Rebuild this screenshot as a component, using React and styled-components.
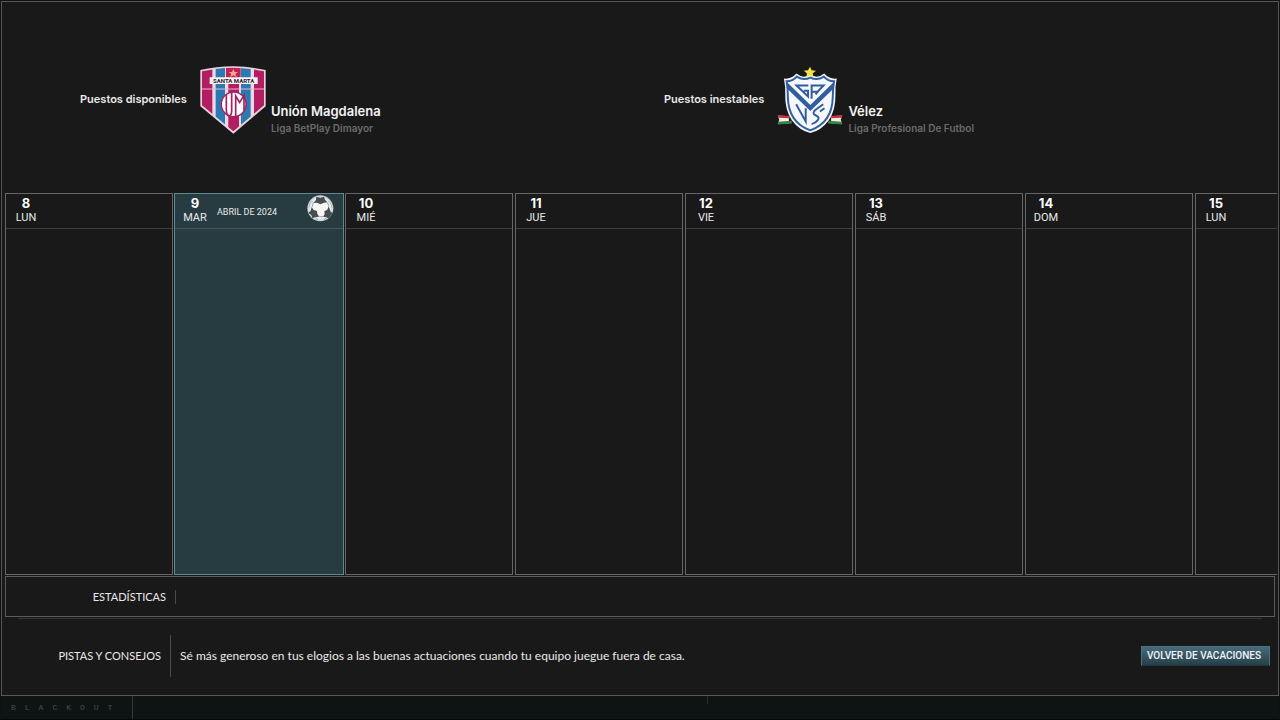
import styled, { createGlobalStyle } from "styled-components"

const GlobalStyle = createGlobalStyle`
    * {
        box-sizing: border-box;
    }

    body {
        margin: 0;
        background: #0c1213;
        color: #e9e9e9;
        font-family: Lato, "Open Sans", sans-serif;
    }

    h2, p {
        margin: 0;
    }

    svg {
        flex: none;
    }
    `

const Page = styled.div`
    min-height: 100vh;
    display: flex;
    flex-direction: column;
    padding: 1px 1px 0;
    `

const Dialog = styled.main`
    flex: 1;
    display: flex;
    flex-direction: column;
    background: #191919;
    border: 1px solid #565858;
    `

const Teams = styled.header`
    height: 191px;
    display: grid;
    grid-template-columns: 584px 1fr;
    padding: 64px 0 0 78px;
    `

const Team = styled.section`
    display: flex;
    align-items: flex-start;
    gap: 5px;
    `

const Status = styled.p`
    margin-right: 8px;
    padding-top: 25px;
    font: 600 11px/16px Inter, sans-serif;
    `

const Club = styled.div`
    padding-top: 36px;

    h2 {
        font: 600 13px/18px Inter, sans-serif;
        color: #f4f4f4;
    }

    p {
        font: 600 10px/16px Inter, sans-serif;
        color: #6b6b6b;
    }
    `

const Week = styled.div`
    flex: 1;
    min-height: 382px;
    display: flex;
    gap: 2px;
    margin: 0 1px 0 3px;
    overflow: hidden;
    `

const Day = styled.section`
    flex: 0 0 ${(props) => (props.$today ? "170px" : "168px")};
    display: flex;
    flex-direction: column;
    margin: ${(props) => (props.$today ? "0 -1px" : "0")};
    border: 1px solid ${(props) => (props.$today ? "#5d8a92" : "#646666")};
    background: ${(props) => (props.$today ? "#273c41" : "#191919")};
    `

const DayHead = styled.header`
    height: 35px;
    display: flex;
    align-items: center;
    padding: 1px 9px 0 0;
    border-bottom: 1px solid ${(props) => (props.$today ? "#45595d" : "#3c3e3e")};

    svg {
        align-self: flex-start;
    }
    `

const DayName = styled.div`
    width: 40px;
    padding-bottom: 4px;
    text-align: center;
    font: 11px/13px Roboto, sans-serif;

    strong {
        display: block;
        font: 700 13px/15px Inter, sans-serif;
        color: #fff;
    }
    `

const Month = styled.span`
    flex: 1;
    margin-left: 2px;
    font: 9px/12px Roboto, sans-serif;
    `

const Stats = styled.section`
    height: 41px;
    display: flex;
    align-items: center;
    margin: 1px 3px 0;
    border: 1px solid #5a5c5c;
    `

const Shade = styled.hr`
    width: calc(100% - 32px);
    height: 1px;
    margin: 1px auto 0;
    border: 0;
    background: #343636;
    `

const Tips = styled.section`
    height: 76px;
    display: flex;
    align-items: center;
    padding: 0 8px 2px 0;
    `

const Label = styled.h2`
    width: ${(props) => props.$width};
    padding-right: 9px;
    border-right: 1px solid #4a4c4c;
    text-align: right;
    font: 11px/${(props) => props.$line} Lato, sans-serif;
    `

const Tip = styled.p`
    flex: 1;
    padding-left: 9px;
    font-size: 12px;
    line-height: 16px;
    `

const Back = styled.button`
    height: 20px;
    padding: 0 8px 0 5px;
    border: 1px solid #4b7180;
    border-bottom-color: #1f363f;
    background: linear-gradient(#456b7b, #263f49);
    color: #f4f4f4;
    font: 500 10px/18px Roboto, sans-serif;
    cursor: pointer;
    `

const Footer = styled.footer`
    height: 24px;
    display: flex;
    background: #0e1414;
    border-bottom: 1px solid #050707;
    `

const Brand = styled.span`
    width: 132px;
    padding-left: 10px;
    border-right: 1px solid #343838;
    color: #4b4d4d;
    font: 8px/24px "Liberation Mono", monospace;
    letter-spacing: 9px;
    white-space: nowrap;
    overflow: hidden;
    `

const Tick = styled.span`
    width: 575px;
    height: 8px;
    border-right: 1px solid #2a2e2e;
    `

const UnionCrest = () => (
    <svg width="66" height="68" viewBox="30 32 198 204" role="img" aria-label="Unión Magdalena">
        <defs>
            <clipPath id="union">
                <path d="M130 37 Q180 38 222 48 V150 L130 228 L36 150 V48 Q80 38 130 37Z" />
            </clipPath>
        </defs>
        <path d="M130 33 Q182 34 227 44 V153 L130 235 L31 153 V44 Q78 34 130 33Z" fill="#e9d3df" />
        <g clipPath="url(#union)">
            <path d="M30 30h200v210H30z" fill="#e8d9e5" />
            <path d="M30 30h37v210H30zM115 30h32v210h-32zM192 30h40v210h-40z" fill="#b21e61" />
            <path d="M77 30h28v210H77zM153 30h29v210h-29z" fill="#2c79b2" />
            <path d="M108 30h44v36h-44z" fill="#bf2158" />
            <path d="M30 101h200" stroke="#dfbccd" strokeWidth="3" />
        </g>
        <path d="M59 66h144v20H59z" fill="#faf5f5" />
        <text x="131" y="82" textAnchor="middle" fontFamily="Roboto, sans-serif" fontSize="18" fontWeight="700" fill="#29242d">SANTA MARTA</text>
        <path d="m130 41 4 9h10l-8 6 4 10-10-6-10 6 4-10-8-6h10z" fill="#f0a890" />
        <circle cx="131" cy="147" r="37" fill="#fff" stroke="#a51e5c" strokeWidth="4" />
        <path d="M109 118v44q0 18 8 20 8-2 8-14v-56M137 184v-62l12 19 13-21v46" fill="none" stroke="#a51e5c" strokeWidth="5" />
    </svg>
)

const VelezCrest = () => (
    <svg width="66" height="68" viewBox="22 31 200 204" role="img" aria-label="Vélez">
        <path d="m24 180 34 2v22l-34 2 5-13zM220 180l-34 2v22l34 2-5-13z" fill="#f4f1e8" />
        <path d="m25 183 36 2M219 183l-36 2" stroke="#c8333d" strokeWidth="7" />
        <path d="m25 203 42-3M219 203l-42-3" stroke="#35843f" strokeWidth="8" />
        <path d="M43 68q22 3 38-15 20 17 42 3 22 14 42-3 16 18 38 15-5 24-4 51 1 43-20 75-23 31-56 39-33-8-56-39-21-32-20-75 1-27-4-51z" fill="#f5f8fc" />
        <path d="M51 76q19 0 31-14 20 13 41 3 21 10 41-3 12 14 31 14-4 24-4 48-1 77-68 101-67-24-68-101 0-24-4-48z" fill="none" stroke="#345f9f" strokeWidth="6" />
        <path d="m51 78 72 70 72-70-3 22-69 66-69-66z" fill="#315c9d" />
        <g fill="none" stroke="#315c9d" strokeWidth="6">
            <path d="M117 89H81l35 33v-17h-13M127 129V89h36l-18 19h-18M145 108l-6 8" />
            <path d="m80 146 29 52v-40M162 146l-24 17q-12 11 2 17 13 5 5 15-6 8-18 11M166 158l-14 10" />
        </g>
        <path d="m122 32 5 11 13 1-10 9 3 12-11-7-12 7 3-12-10-9 13-1z" fill="#eee448" />
    </svg>
)

const Ball = () => (
    <svg width="27" height="27" viewBox="0 0 81 81" aria-hidden="true">
        <defs>
            <radialGradient id="ball">
                <stop offset="0.7" stopColor="#f6f6f6" />
                <stop offset="1" stopColor="#c9cdce" />
            </radialGradient>
            <clipPath id="round">
                <circle cx="40" cy="40" r="39" />
            </clipPath>
        </defs>
        <circle cx="40" cy="40" r="39" fill="url(#ball)" />
        <g clipPath="url(#round)">
            <path d="m28 5 12 3 11-3 3 9 7 8-10 1-11 5-10-5-11 1 8-9z" fill="#474d50" />
            <path d="m14 36 6 9 10 3 1 9 6 8-11 1-10 4-3-10-9-6 7-7z" fill="#474d50" />
            <path d="m65 34-4 10-9 5 1 9-5 7 11 2 7 6 5-11 8-6-8-6z" fill="#474d50" />
            <path d="m19 23-4 13M61 22l5 12M26 66l6 9M59 67l-8 8M37 65h12" fill="none" stroke="#9da2a4" strokeWidth="3" />
            <path d="m17 20-7 2-4 16M64 19l7 4 4 15" fill="none" stroke="#b5babb" strokeWidth="3" />
        </g>
    </svg>
)

const days = [
    { number: 8, name: "LUN" },
    { number: 9, name: "MAR", month: "ABRIL DE 2024" },
    { number: 10, name: "MIÉ" },
    { number: 11, name: "JUE" },
    { number: 12, name: "VIE" },
    { number: 13, name: "SÁB" },
    { number: 14, name: "DOM" },
    { number: 15, name: "LUN" },
]

const App = () => {
    return (
        <Page>
            <GlobalStyle />
            <Dialog>
                <Teams>
                    <Team>
                        <Status>Puestos disponibles</Status>
                        <UnionCrest />
                        <Club>
                            <h2>Unión Magdalena</h2>
                            <p>Liga BetPlay Dimayor</p>
                        </Club>
                    </Team>
                    <Team>
                        <Status>Puestos inestables</Status>
                        <VelezCrest />
                        <Club>
                            <h2>Vélez</h2>
                            <p>Liga Profesional De Futbol</p>
                        </Club>
                    </Team>
                </Teams>
                <Week>
                    {days.map((day) => (
                        <Day key={day.number} $today={Boolean(day.month)}>
                            <DayHead $today={Boolean(day.month)}>
                                <DayName>
                                    <strong>{day.number}</strong>
                                    {day.name}
                                </DayName>
                                {day.month && <Month>{day.month}</Month>}
                                {day.month && <Ball />}
                            </DayHead>
                        </Day>
                    ))}
                </Week>
                <Stats>
                    <Label $width="170px" $line="14px">ESTADÍSTICAS</Label>
                </Stats>
                <Shade />
                <Tips>
                    <Label $width="169px" $line="42px">PISTAS Y CONSEJOS</Label>
                    <Tip>Sé más generoso en tus elogios a las buenas actuaciones cuando tu equipo juegue fuera de casa.</Tip>
                    <Back type="button">VOLVER DE VACACIONES</Back>
                </Tips>
            </Dialog>
            <Footer>
                <Brand>BLACKOUT</Brand>
                <Tick />
            </Footer>
        </Page>
    )
}

export default App
